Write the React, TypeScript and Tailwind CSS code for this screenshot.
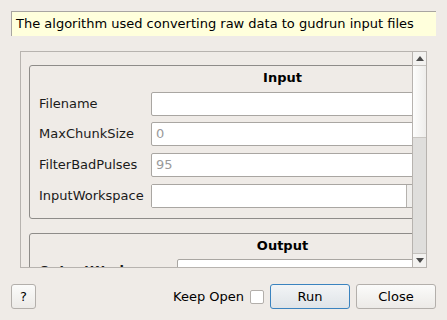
import React from "react";

const Field = ({ placeholder }: { placeholder?: string }) => (
  <div className="w-[370px] h-[24px] bg-white border border-[#a9a6a2] rounded-[2px] flex items-center pl-[4px] text-[#9a9a9a]">
    {placeholder}
  </div>
);

const Row = ({ label, children, mt, lw = 112, bold = false }: { label: string; children: React.ReactNode; mt: string; lw?: number; bold?: boolean }) => (
  <div className={`flex items-center ${mt}`}>
    <div style={{ width: lw }} className={`shrink-0 ${bold ? "font-bold" : ""}`}>{label}</div>
    {children}
  </div>
);

export default function App() {
  return (
    <div className="w-[447px] h-[320px] bg-[#efebe7] flex flex-col text-[13px] text-[#1a1a1a] overflow-hidden" style={{ fontFamily: '"DejaVu Sans", sans-serif' }}>
      <div className="mx-[11px] mt-[11px] h-[25px] bg-[#ffffdc] border-l border-t border-[#a8a5a1] pl-[4px] flex items-center text-black">
        The algorithm used converting raw data to gudrun input files
      </div>
      <div className="ml-[20px] mt-[15px] w-[407px] h-[217px] border border-[#b7b3af] flex">
        <div className="flex-1 overflow-hidden">
          <div className="w-[520px] pl-[8px] pt-[13px]">
            <div className="w-[507px] border border-[#8e8c89] rounded-[3px] pl-[9px] pb-[10px]">
              <div className="mt-[4px] -ml-[9px] h-[16px] flex items-center justify-center font-bold text-black">Input</div>
              <Row label="Filename" mt="mt-[6px]"><Field /></Row>
              <Row label="MaxChunkSize" mt="mt-[6px]"><Field placeholder="0" /></Row>
              <Row label="FilterBadPulses" mt="mt-[7px]"><Field placeholder="95" /></Row>
              <Row label="InputWorkspace" mt="mt-[7px]">
                <div className="w-[370px] h-[24px] bg-[#f0efed] border border-[#a9a6a2] rounded-[2px] flex">
                  <div className="w-[255px] h-full bg-white border-r border-[#b5b2ae]" />
                </div>
              </Row>
            </div>
            <div className="mt-[14px] w-[507px] h-[80px] border border-[#8e8c89] rounded-[3px] pl-[9px]">
              <div className="mt-[4px] -ml-[9px] h-[16px] flex items-center justify-center font-bold text-black">Output</div>
              <Row label="OutputWorkspace" mt="mt-[5px]" lw={138} bold>
                <div className="w-[340px] h-[24px] bg-white border border-[#a9a6a2] rounded-[2px]" />
              </Row>
            </div>
          </div>
        </div>
        <div className="w-[14px] border-l border-[#b7b3af] flex flex-col">
          <div className="h-[14px] border-b border-[#c4c1bd] bg-[#f3f2f0] flex items-center justify-center">
            <svg width="8" height="5" viewBox="0 0 8 5"><polygon points="0,5 8,5 4,0" fill="#4a4a4a" /></svg>
          </div>
          <div className="h-[72px] bg-gradient-to-r from-[#fdfdfc] to-[#eeedeb] border-b border-[#c9c6c2]" />
          <div className="flex-1 bg-[#dfdedc]" />
          <div className="h-[14px] border-t border-[#c4c1bd] bg-[#f3f2f0] flex items-center justify-center">
            <svg width="8" height="5" viewBox="0 0 8 5"><polygon points="0,0 8,0 4,5" fill="#4a4a4a" /></svg>
          </div>
        </div>
      </div>
      <div className="mt-[16px] flex items-center px-[11px]">
        <div className="w-[25px] h-[25px] border border-[#b3afab] rounded-[3px] bg-gradient-to-b from-[#fbfbfa] to-[#eceae7] flex items-center justify-center text-black">?</div>
        <div className="ml-auto text-black">Keep Open</div>
        <div className="ml-[6px] w-[14px] h-[14px] bg-white border border-[#b3afab] rounded-[2px]" />
        <div className="ml-[6px] w-[80px] h-[25px] border border-[#3a83bf] rounded-[3px] bg-gradient-to-b from-[#f2f4f6] to-[#dfe4e8] flex items-center justify-center text-black">Run</div>
        <div className="ml-[6px] w-[80px] h-[25px] border border-[#b3afab] rounded-[3px] bg-gradient-to-b from-[#fbfbfa] to-[#eceae7] flex items-center justify-center text-black">Close</div>
      </div>
    </div>
  );
}
